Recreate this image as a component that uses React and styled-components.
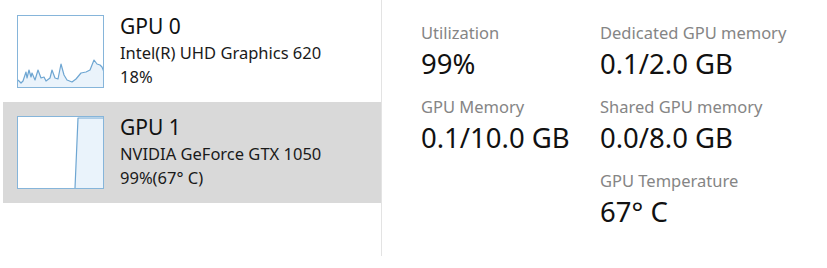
import React from 'react'
import styled, { createGlobalStyle } from 'styled-components';

const GlobalStyle = createGlobalStyle`
    html, body {
        margin: 0;
        padding: 0;
        background: #ffffff;
    }
    body {
        font-family: "Noto Sans", "Open Sans", sans-serif;
        color: #1a1a1a;
    }
`;

const Page = styled.div`
    display: flex;
    width: 827px;
    height: 268px;
    background: #ffffff;
`;

const Sidebar = styled.div`
    width: 378px;
    height: 255px;
    padding: 1px 0 0 3px;
    border-right: 1px solid #e3e3e3;
    display: flex;
    flex-direction: column;
`;

const GpuRow = styled.div`
    height: 101px;
    box-sizing: border-box;
    padding: 14px 0 0 14px;
    display: flex;
    gap: 16px;
    background: ${p => (p.selected ? '#d9d9d9' : 'transparent')};
`;

const Graph = styled.svg`
    display: block;
    width: 87px;
    height: 73px;
    flex: none;
`;

const Info = styled.div`
    display: flex;
    flex-direction: column;
    margin-top: -2px;
`;

const GpuName = styled.div`
    font-size: 21px;
    line-height: 26px;
    color: #111;
`;

const Model = styled.div`
    font-size: 16.5px;
    line-height: 24px;
    color: #1a1a1a;
    margin-top: 2px;
`;

const Load = styled.div`
    font-size: 16.5px;
    line-height: 24px;
    color: #1a1a1a;
`;

const Details = styled.div`
    padding: 22px 0 0 39px;
    display: grid;
    grid-template-columns: 179px auto;
    grid-auto-rows: 74px;
    align-content: start;
`;

const Stat = styled.div`
    display: flex;
    flex-direction: column;
`;

const Label = styled.div`
    font-size: 16.5px;
    line-height: 22px;
    color: #858585;
`;

const Value = styled.div`
    font-size: 27.5px;
    line-height: 34px;
    margin-top: 3px;
    color: #111;
`;

const gpu0Points = [
    [1, 65], [4, 68], [6, 66], [9, 57], [10, 63], [12, 55], [14, 62], [15, 58],
    [18, 65], [21, 55], [24, 63], [27, 62], [29, 66], [33, 63], [35, 55], [38, 63],
    [41, 64], [44, 49], [47, 60], [50, 65], [55, 67], [59, 64], [64, 58], [69, 57],
    [73, 55], [77, 45], [80, 49], [83, 50], [85, 52], [87, 57]
];

const gpu1Points = [[58, 72], [61, 2], [87, 2]];

function toPath(points) {
    return points.map(([x, y], i) => `${i ? 'L' : 'M'}${x} ${y}`).join(' ');
}

function UsageGraph({ points }) {
    const line = toPath(points);
    const area = `${line} L87 72 L0 72 Z`;
    return (
        <Graph viewBox="0 0 87 73">
            <rect x="0.5" y="0.5" width="86" height="72" fill="#ffffff" />
            <path d={area} fill="#eaf3fb" />
            <path d={line} fill="none" stroke="#6ea6d2" strokeWidth="1.2" strokeLinejoin="round" />
            <rect x="0.5" y="0.5" width="86" height="72" fill="none" stroke="#86b5da" />
        </Graph>
    );
}

const stats = [
    { label: 'Utilization', value: '99%' },
    { label: 'Dedicated GPU memory', value: '0.1/2.0 GB' },
    { label: 'GPU Memory', value: '0.1/10.0 GB' },
    { label: 'Shared GPU memory', value: '0.0/8.0 GB' },
    null,
    { label: 'GPU Temperature', value: '67° C' },
];

export default function App() {
    return (
        <>
            <GlobalStyle />
            <Page>
                <Sidebar>
                    <GpuRow>
                        <UsageGraph points={gpu0Points} />
                        <Info>
                            <GpuName>GPU 0</GpuName>
                            <Model>Intel(R) UHD Graphics 620</Model>
                            <Load>18%</Load>
                        </Info>
                    </GpuRow>
                    <GpuRow selected>
                        <UsageGraph points={gpu1Points} />
                        <Info>
                            <GpuName>GPU 1</GpuName>
                            <Model>NVIDIA GeForce GTX 1050</Model>
                            <Load>99%(67° C)</Load>
                        </Info>
                    </GpuRow>
                </Sidebar>
                <Details>
                    {stats.map((s, i) =>
                        s ? (
                            <Stat key={i}>
                                <Label>{s.label}</Label>
                                <Value>{s.value}</Value>
                            </Stat>
                        ) : (
                            <div key={i} />
                        )
                    )}
                </Details>
            </Page>
        </>
    );
}
